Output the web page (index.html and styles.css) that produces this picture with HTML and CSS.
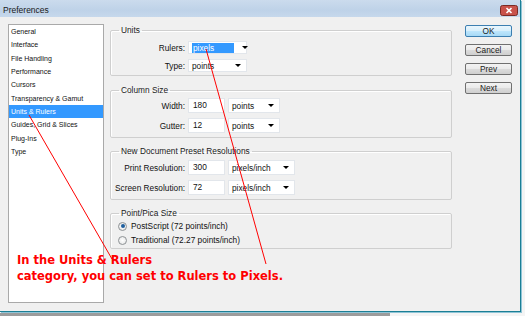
FILE: index.html
```html
<!DOCTYPE html>
<html lang="en">
<head>
    <meta charset="UTF-8">
    <title>Preferences</title>
    <link rel="stylesheet" href="styles.css">
</head>
<body>
    <div class="window">
        <div class="titlebar">
            <span class="title">Preferences</span>
            <svg class="close" width="18" height="11" viewBox="0 0 18 11">
                <rect x="0.5" y="0.5" width="17" height="10" rx="2" fill="#c9524a" stroke="#7a2a24"/>
                <path d="M6.5 3 L11.5 8 M11.5 3 L6.5 8" stroke="#fff" stroke-width="1.6"/>
            </svg>
        </div>
        <div class="dialog">
            <ul class="categories">
                <li>General</li>
                <li>Interface</li>
                <li>File Handling</li>
                <li>Performance</li>
                <li>Cursors</li>
                <li>Transparency &amp; Gamut</li>
                <li class="active">Units &amp; Rulers</li>
                <li>Guides, Grid &amp; Slices</li>
                <li>Plug-Ins</li>
                <li>Type</li>
            </ul>

            <div class="panels">
                <fieldset class="group units">
                    <legend>Units</legend>
                    <div class="row">
                        <label>Rulers:</label>
                        <div class="select w59"><span class="value picked">pixels</span><span class="arrow"></span></div>
                    </div>
                    <div class="row">
                        <label>Type:</label>
                        <div class="select w59"><span class="value">points</span><span class="arrow"></span></div>
                    </div>
                </fieldset>

                <fieldset class="group columns">
                    <legend>Column Size</legend>
                    <div class="row tall">
                        <label>Width:</label>
                        <div class="field">180</div>
                        <div class="select w52"><span class="value">points</span><span class="arrow"></span></div>
                    </div>
                    <div class="row tall">
                        <label>Gutter:</label>
                        <div class="field">12</div>
                        <div class="select w52"><span class="value">points</span><span class="arrow"></span></div>
                    </div>
                </fieldset>

                <fieldset class="group presets">
                    <legend>New Document Preset Resolutions</legend>
                    <div class="row tall">
                        <label>Print Resolution:</label>
                        <div class="field">300</div>
                        <div class="select w67"><span class="value">pixels/inch</span><span class="arrow"></span></div>
                    </div>
                    <div class="row tall">
                        <label>Screen Resolution:</label>
                        <div class="field">72</div>
                        <div class="select w67"><span class="value">pixels/inch</span><span class="arrow"></span></div>
                    </div>
                </fieldset>

                <fieldset class="group pica">
                    <legend>Point/Pica Size</legend>
                    <div class="radio-row"><span class="radio checked"></span>PostScript (72 points/inch)</div>
                    <div class="radio-row"><span class="radio"></span>Traditional (72.27 points/inch)</div>
                </fieldset>
            </div>

            <div class="buttons">
                <div class="btn default">OK</div>
                <div class="btn">Cancel</div>
                <div class="btn">Prev</div>
                <div class="btn">Next</div>
            </div>
        </div>

        <svg class="notes" width="525" height="316">
            <line x1="29" y1="115" x2="112" y2="259" stroke="#ff0000" stroke-width="1"/>
            <line x1="206" y1="49" x2="266" y2="264" stroke="#ff0000" stroke-width="1"/>
        </svg>
        <p class="callout">In the Units &amp; Rulers<br>category, you can set to Rulers to Pixels.</p>
    </div>
    <div class="taskstrip"></div>
</body>
</html>
```

FILE: styles.css
```css
body {
    margin: 0;
    background-color: #f4f4f4;
    font-family: "Liberation Sans", Arial, sans-serif;
    font-size: 8.3px;
    color: #111;
}
.window {
    position: relative;
    width: 520px;
    height: 311px;
    border-right: 1px solid #1b7f95;
    border-bottom: 1px solid #1b7f95;
    box-shadow: 1px 1px 0 #8fc4d6;
    background-color: #f0f0f0;
}
.titlebar {
    height: 17px;
    display: flex;
    align-items: center;
    justify-content: space-between;
    padding: 0 2px 0 3px;
    background: linear-gradient(#cbdbed, #bed2e8 60%, #c6d8ec);
}
.title {
    font-size: 8.5px;
    color: #1a1a1a;
    margin-top: 2px;
}
.close {
    display: block;
    margin-top: 3px;
}
.dialog {
    display: flex;
    padding: 7px 0 0 8px;
}
.categories {
    list-style: none;
    margin: 0;
    padding: 0;
    width: 94px;
    height: 277px;
    border: 1px solid #a9a9a9;
    background-color: #fff;
    font-size: 7px;
}
.categories li {
    height: 13.33px;
    line-height: 13.33px;
    padding-left: 2px;
    white-space: nowrap;
}
.categories li.active {
    background-color: #3399ff;
    color: #fff;
}
.panels {
    width: 342px;
    margin-left: 6px;
    margin-top: 1px;
}
.group {
    margin: 0;
    padding: 0 4px;
    border: 1px solid #cfcfcf;
    border-radius: 2px;
    box-shadow: inset 1px 1px 0 #fff;
}
.group legend {
    margin-left: 4px;
    padding: 0 2px;
    line-height: 10px;
    color: #1a1a1a;
}
.units { padding-top: 6px; padding-bottom: 3px; }
.columns { margin-top: 9px; padding-top: 3px; padding-bottom: 4px; }
.presets { margin-top: 8px; padding-top: 4px; padding-bottom: 4px; }
.pica { margin-top: 8px; padding-top: 1px; padding-bottom: 1px; }

.row {
    display: flex;
    align-items: center;
    height: 13px;
}
.row + .row {
    margin-top: 5px;
}
.row.tall {
    height: 15px;
}
.row label {
    width: 70px;
    margin-right: 3px;
    text-align: right;
    white-space: nowrap;
}
.field {
    box-sizing: border-box;
    width: 37px;
    height: 15px;
    line-height: 13px;
    padding-left: 4px;
    border: 1px solid #e2e6eb;
    background-color: #fff;
    margin-right: 3px;
}
.select {
    box-sizing: border-box;
    display: flex;
    align-items: center;
    height: 100%;
    padding: 0 5px 0 3px;
    border: 1px solid #e2e6eb;
    background-color: #fff;
}
.select .value {
    flex: 1;
    line-height: 10px;
}
.select .arrow {
    width: 0;
    height: 0;
    border-left: 3px solid transparent;
    border-right: 3px solid transparent;
    border-top: 3px solid #000;
}
.select .value.picked {
    flex: 0 0 auto;
    width: 41px;
    margin-right: 8px;
    padding-left: 1px;
    background-color: #3399ff;
    color: #fff;
}
.w59 { width: 59px; }
.w52 { width: 52px; }
.w67 { width: 67px; }

.radio-row {
    display: flex;
    align-items: center;
    height: 14px;
    padding-left: 3px;
}
.radio {
    box-sizing: border-box;
    width: 9px;
    height: 9px;
    border-radius: 50%;
    border: 1px solid #8e9295;
    background: radial-gradient(#fff, #e2e2e2);
    margin-right: 4px;
    display: flex;
    align-items: center;
    justify-content: center;
}
.radio.checked::after {
    content: "";
    width: 4px;
    height: 4px;
    border-radius: 50%;
    background: #1f5f9e;
}

.buttons {
    margin-left: 13px;
    margin-top: 1px;
    width: 47px;
    display: flex;
    flex-direction: column;
    gap: 7px;
}
.btn {
    box-sizing: border-box;
    height: 12px;
    line-height: 10px;
    text-align: center;
    border: 1px solid #707070;
    border-radius: 2px;
    background: linear-gradient(#f3f3f3, #ebebeb 45%, #dcdcdc 50%, #cfcfcf);
    color: #1a1a1a;
}
.btn.default {
    border-color: #3c7fb1;
    background: linear-gradient(#eaf6fd, #d9f0fc 45%, #bee6fd 50%, #a7d9f5);
}

.notes {
    position: absolute;
    left: 0;
    top: 0;
    pointer-events: none;
}
.callout {
    position: absolute;
    left: 17px;
    top: 252px;
    margin: 0;
    font-family: "DejaVu Sans", Verdana, sans-serif;
    font-weight: bold;
    font-size: 11.5px;
    line-height: 16px;
    color: #ff0000;
    white-space: nowrap;
}
.taskstrip {
    width: 390px;
    height: 3px;
    margin-top: 1px;
    background-color: #9c9c9c;
}
```
